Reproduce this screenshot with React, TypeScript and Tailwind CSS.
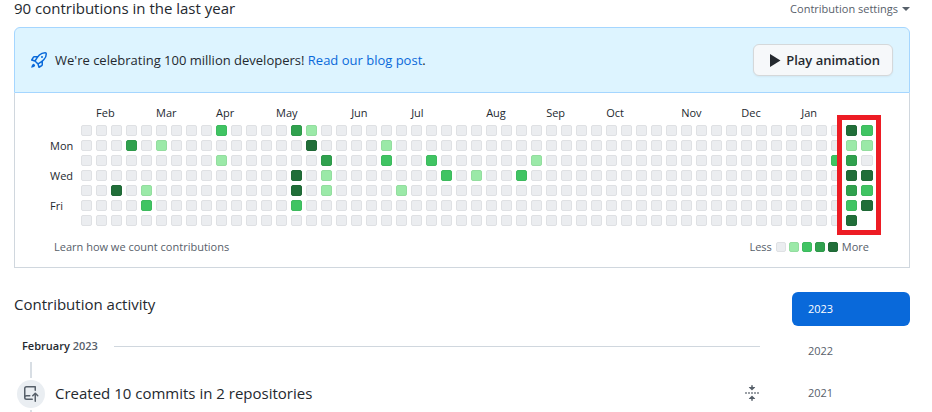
import { clsx } from "clsx";

const LEVELS = [
    "bg-[#ebedf0] border-[#dfe1e4]",
    "bg-[#9be9a8] border-[#93dd9f]",
    "bg-[#40c463] border-[#3dba5e]",
    "bg-[#30a14e] border-[#2e994a]",
    "bg-[#216e39] border-[#1f6836]",
];

const WEEKS = 53;

const MONTHS = [
    { name: "Feb", span: 4 },
    { name: "Mar", span: 4 },
    { name: "Apr", span: 4 },
    { name: "May", span: 5 },
    { name: "Jun", span: 4 },
    { name: "Jul", span: 5 },
    { name: "Aug", span: 4 },
    { name: "Sep", span: 4 },
    { name: "Oct", span: 5 },
    { name: "Nov", span: 4 },
    { name: "Dec", span: 4 },
    { name: "Jan", span: 5 },
];

const DAYS = ["", "Mon", "", "Wed", "", "Fri", ""];

// week index -> level for each day, Sunday first
const activity: Record<number, number[]> = {
    2: [0, 0, 0, 0, 4, 0, 0],
    3: [0, 3, 0, 0, 0, 0, 0],
    4: [0, 0, 0, 0, 1, 2, 0],
    5: [0, 1, 0, 0, 0, 0, 0],
    9: [2, 0, 1, 0, 0, 0, 0],
    14: [3, 0, 0, 4, 4, 2, 0],
    15: [1, 4, 0, 0, 0, 0, 0],
    16: [0, 0, 3, 1, 1, 0, 0],
    20: [0, 1, 2, 0, 0, 0, 0],
    21: [0, 0, 0, 0, 1, 0, 0],
    23: [0, 0, 2, 0, 0, 0, 0],
    24: [0, 0, 0, 2, 0, 0, 0],
    26: [0, 0, 0, 1, 0, 0, 0],
    29: [0, 0, 0, 2, 0, 0, 0],
    30: [0, 0, 1, 0, 0, 0, 0],
    50: [0, 0, 2, 0, 0, 0, 0],
    51: [4, 1, 3, 4, 3, 2, 4],
    52: [2, 1, 0, 4, 2, 4],
};

const YEARS = [2023, 2022, 2021];

function Icon({ d, className }: { d: string; className?: string }) {
    return (
        <svg viewBox="0 0 16 16" width="16" height="16" fill="currentColor" aria-hidden="true" className={clsx("shrink-0", className)}>
            <path fillRule="evenodd" d={d} />
        </svg>
    );
}

const ROCKET =
    "M14.064 0a8.75 8.75 0 00-6.187 2.563l-.459.458c-.314.314-.616.641-.904.979H3.31a1.75 1.75 0 00-1.49.833L.11 7.607a.75.75 0 00.418 1.11l3.102.954c.037.051.079.1.124.145l2.429 2.428c.046.046.094.088.145.125l.954 3.102a.75.75 0 001.11.418l2.774-1.707a1.75 1.75 0 00.833-1.49V9.485c.338-.288.665-.59.979-.904l.458-.459A8.75 8.75 0 0016 1.936V1.75A1.75 1.75 0 0014.25 0h-.186zM10.5 10.625c-.088.06-.177.118-.266.175l-2.35 1.521.548 1.783 1.949-1.2a.25.25 0 00.119-.213v-2.066zM3.678 8.116L5.2 5.766c.058-.09.117-.178.176-.266H3.309a.25.25 0 00-.213.119l-1.2 1.95 1.782.547zm5.26-4.493A7.25 7.25 0 0114.063 1.5h.186a.25.25 0 01.25.25v.186a7.25 7.25 0 01-2.123 5.127l-.459.458a15.21 15.21 0 01-2.499 2.02l-2.317 1.5-2.143-2.143 1.5-2.317a15.25 15.25 0 012.02-2.5l.458-.458h.002zM12 5a1 1 0 11-2 0 1 1 0 012 0zm-8.44 9.56a1.5 1.5 0 10-2.12-2.12c-.734.73-1.047 2.332-1.15 3.003a.23.23 0 00.265.265c.671-.103 2.273-.416 3.005-1.148z";
const REPO_PUSH =
    "M1 2.5A2.5 2.5 0 013.5 0h8.75a.75.75 0 01.75.75v3.5a.75.75 0 01-1.5 0V1.5h-8a1 1 0 00-1 1v6.708A2.492 2.492 0 013.5 9h3.25a.75.75 0 010 1.5H3.5a1 1 0 100 2h5.75a.75.75 0 010 1.5H3.5A2.5 2.5 0 011 11.5v-9zm13.23 7.79a.75.75 0 001.06-1.06l-2.505-2.505a.75.75 0 00-1.06 0L9.22 9.229a.75.75 0 001.06 1.061l1.225-1.224v6.184a.75.75 0 001.5 0V9.066l1.224 1.224z";
const FOLD =
    "M10.896 2H8.75V.75a.75.75 0 00-1.5 0V2H5.104a.25.25 0 00-.177.427l2.896 2.896a.25.25 0 00.354 0l2.896-2.896A.25.25 0 0010.896 2zM8.75 15.25a.75.75 0 01-1.5 0V14H5.104a.25.25 0 01-.177-.427l2.896-2.896a.25.25 0 01.354 0l2.896 2.896a.25.25 0 01-.177.427H8.75v1.25zm-6.5-6.5a.75.75 0 000-1.5h-.5a.75.75 0 000 1.5h.5zM6 8a.75.75 0 01-.75.75h-.5a.75.75 0 010-1.5h.5A.75.75 0 016 8zm2.25.75a.75.75 0 000-1.5h-.5a.75.75 0 000 1.5h.5zM12 8a.75.75 0 01-.75.75h-.5a.75.75 0 010-1.5h.5A.75.75 0 0112 8zm2.25.75a.75.75 0 000-1.5h-.5a.75.75 0 000 1.5h.5z";

function Banner() {
    return (
        <div className="flex items-center gap-2 h-[66px] px-4 rounded-t-md border border-[#a5d6ff] bg-[#ddf4ff]">
            <Icon d={ROCKET} className="text-[#0969da]" />
            <p className="flex-1 text-[13px] leading-5">
                We're celebrating 100 million developers!{" "}
                <a href="#blog" className="text-[#0969da]">Read our blog post</a>.
            </p>
            <button type="button" className="flex items-center gap-1 h-8 px-3 rounded-md border border-[#d5d8da] bg-[#f6f8fa] text-[13px] leading-5 font-semibold shadow-xs">
                <svg viewBox="0 0 16 16" width="16" height="16" fill="currentColor" aria-hidden="true">
                    <path d="M4 2v13L14.5 8.5z" />
                </svg>
                Play animation
            </button>
        </div>
    );
}

function Graph() {
    return (
        <div className="relative w-max">
            <table className="table-fixed border-separate border-spacing-1 w-[835px] text-[11px] leading-[11px]">
                <colgroup>
                    <col className="w-[31px]" />
                    {Array.from({ length: WEEKS }, (_, w) => (
                        <col key={w} className="w-[11px]" />
                    ))}
                </colgroup>
                <thead>
                    <tr className="h-[14px]">
                        <td className="p-0" />
                        <td className="p-0" />
                        {MONTHS.map((m) => (
                            <th key={m.name} colSpan={m.span} scope="colgroup" className="p-0 text-left align-top font-normal">
                                {m.name}
                            </th>
                        ))}
                    </tr>
                </thead>
                <tbody>
                    {DAYS.map((day, d) => (
                        <tr key={d} className="h-[11px]">
                            <th scope="row" className="p-0 pl-1 text-left font-normal">{day}</th>
                            {Array.from({ length: WEEKS }, (_, w) => {
                                const level = activity[w] ? activity[w][d] : 0;
                                return <td key={w} className={clsx("p-0", level !== undefined && ["rounded-xs border", LEVELS[level]])} />;
                            })}
                        </tr>
                    ))}
                </tbody>
            </table>
            {/* Highlight around the latest two weeks */}
            <div className="absolute -right-1 -bottom-[5px] w-11 h-[120px] border-5 border-[#ed1c24]" />
        </div>
    );
}

export default function App() {
    return (
        <div className="pl-3.5 pr-[22px] bg-white text-[#24292f] font-['Open_Sans',sans-serif]">
            <div className="flex items-start justify-between h-[27px]">
                <h2 className="text-[15px] leading-4">90 contributions in the last year</h2>
                <button type="button" className="flex items-center gap-1 text-[11px] leading-[18px] text-[#57606a]">
                    Contribution settings
                    <span className="border-x-4 border-t-4 border-x-transparent border-t-current" />
                </button>
            </div>

            <section>
                <Banner />
                <div className="border border-t-0 border-[#d0d7de] pt-2.5 pb-2.5 pl-[27px]">
                    <Graph />
                    <div className="flex items-center justify-between pl-3 pr-10 pt-[7px] text-[11px] leading-5 text-[#57606a]">
                        <a href="#learn">Learn how we count contributions</a>
                        <div className="flex items-center gap-1">
                            <span>Less</span>
                            <div className="flex gap-[3px]">
                                {LEVELS.map((level) => (
                                    <span key={level} className={clsx("size-2.5 rounded-xs border", level)} />
                                ))}
                            </div>
                            <span>More</span>
                        </div>
                    </div>
                </div>
            </section>

            <div className="flex gap-8 pt-6">
                <main className="flex-1">
                    <h2 className="text-[15px] leading-6">Contribution activity</h2>
                    <div className="flex items-center gap-4 pt-5 pl-2">
                        <h3 className="text-[11px] leading-5 font-semibold">
                            February <span className="text-[#57606a]">2023</span>
                        </h3>
                        <div className="flex-1 border-t border-[#d0d7de]" />
                    </div>
                    <div className="flex gap-2.5 pt-1.5 pl-[3px]">
                        <div className="flex flex-col items-center gap-0.5">
                            <div className="w-0.5 h-4 bg-[#d8dee4]" />
                            <div className="flex items-center justify-center size-7 rounded-full bg-[#eaeef2] text-[#57606a]">
                                <Icon d={REPO_PUSH} />
                            </div>
                            <div className="w-0.5 h-0.5 bg-[#d8dee4]" />
                        </div>
                        <button type="button" className="flex flex-1 items-center justify-between h-6 mt-[19px] text-[15px] leading-6">
                            Created 10 commits in 2 repositories
                            <Icon d={FOLD} className="text-[#57606a]" />
                        </button>
                    </div>
                </main>
                <nav className="flex flex-col gap-2 w-[118px]">
                    {YEARS.map((year) => (
                        <a
                            key={year}
                            href={`#${year}`}
                            className={clsx(
                                "px-4 py-2 rounded-md text-[11px] leading-[18px]",
                                year === 2023 ? "bg-[#0969da] text-white" : "text-[#57606a]"
                            )}
                        >
                            {year}
                        </a>
                    ))}
                </nav>
            </div>
        </div>
    );
}
